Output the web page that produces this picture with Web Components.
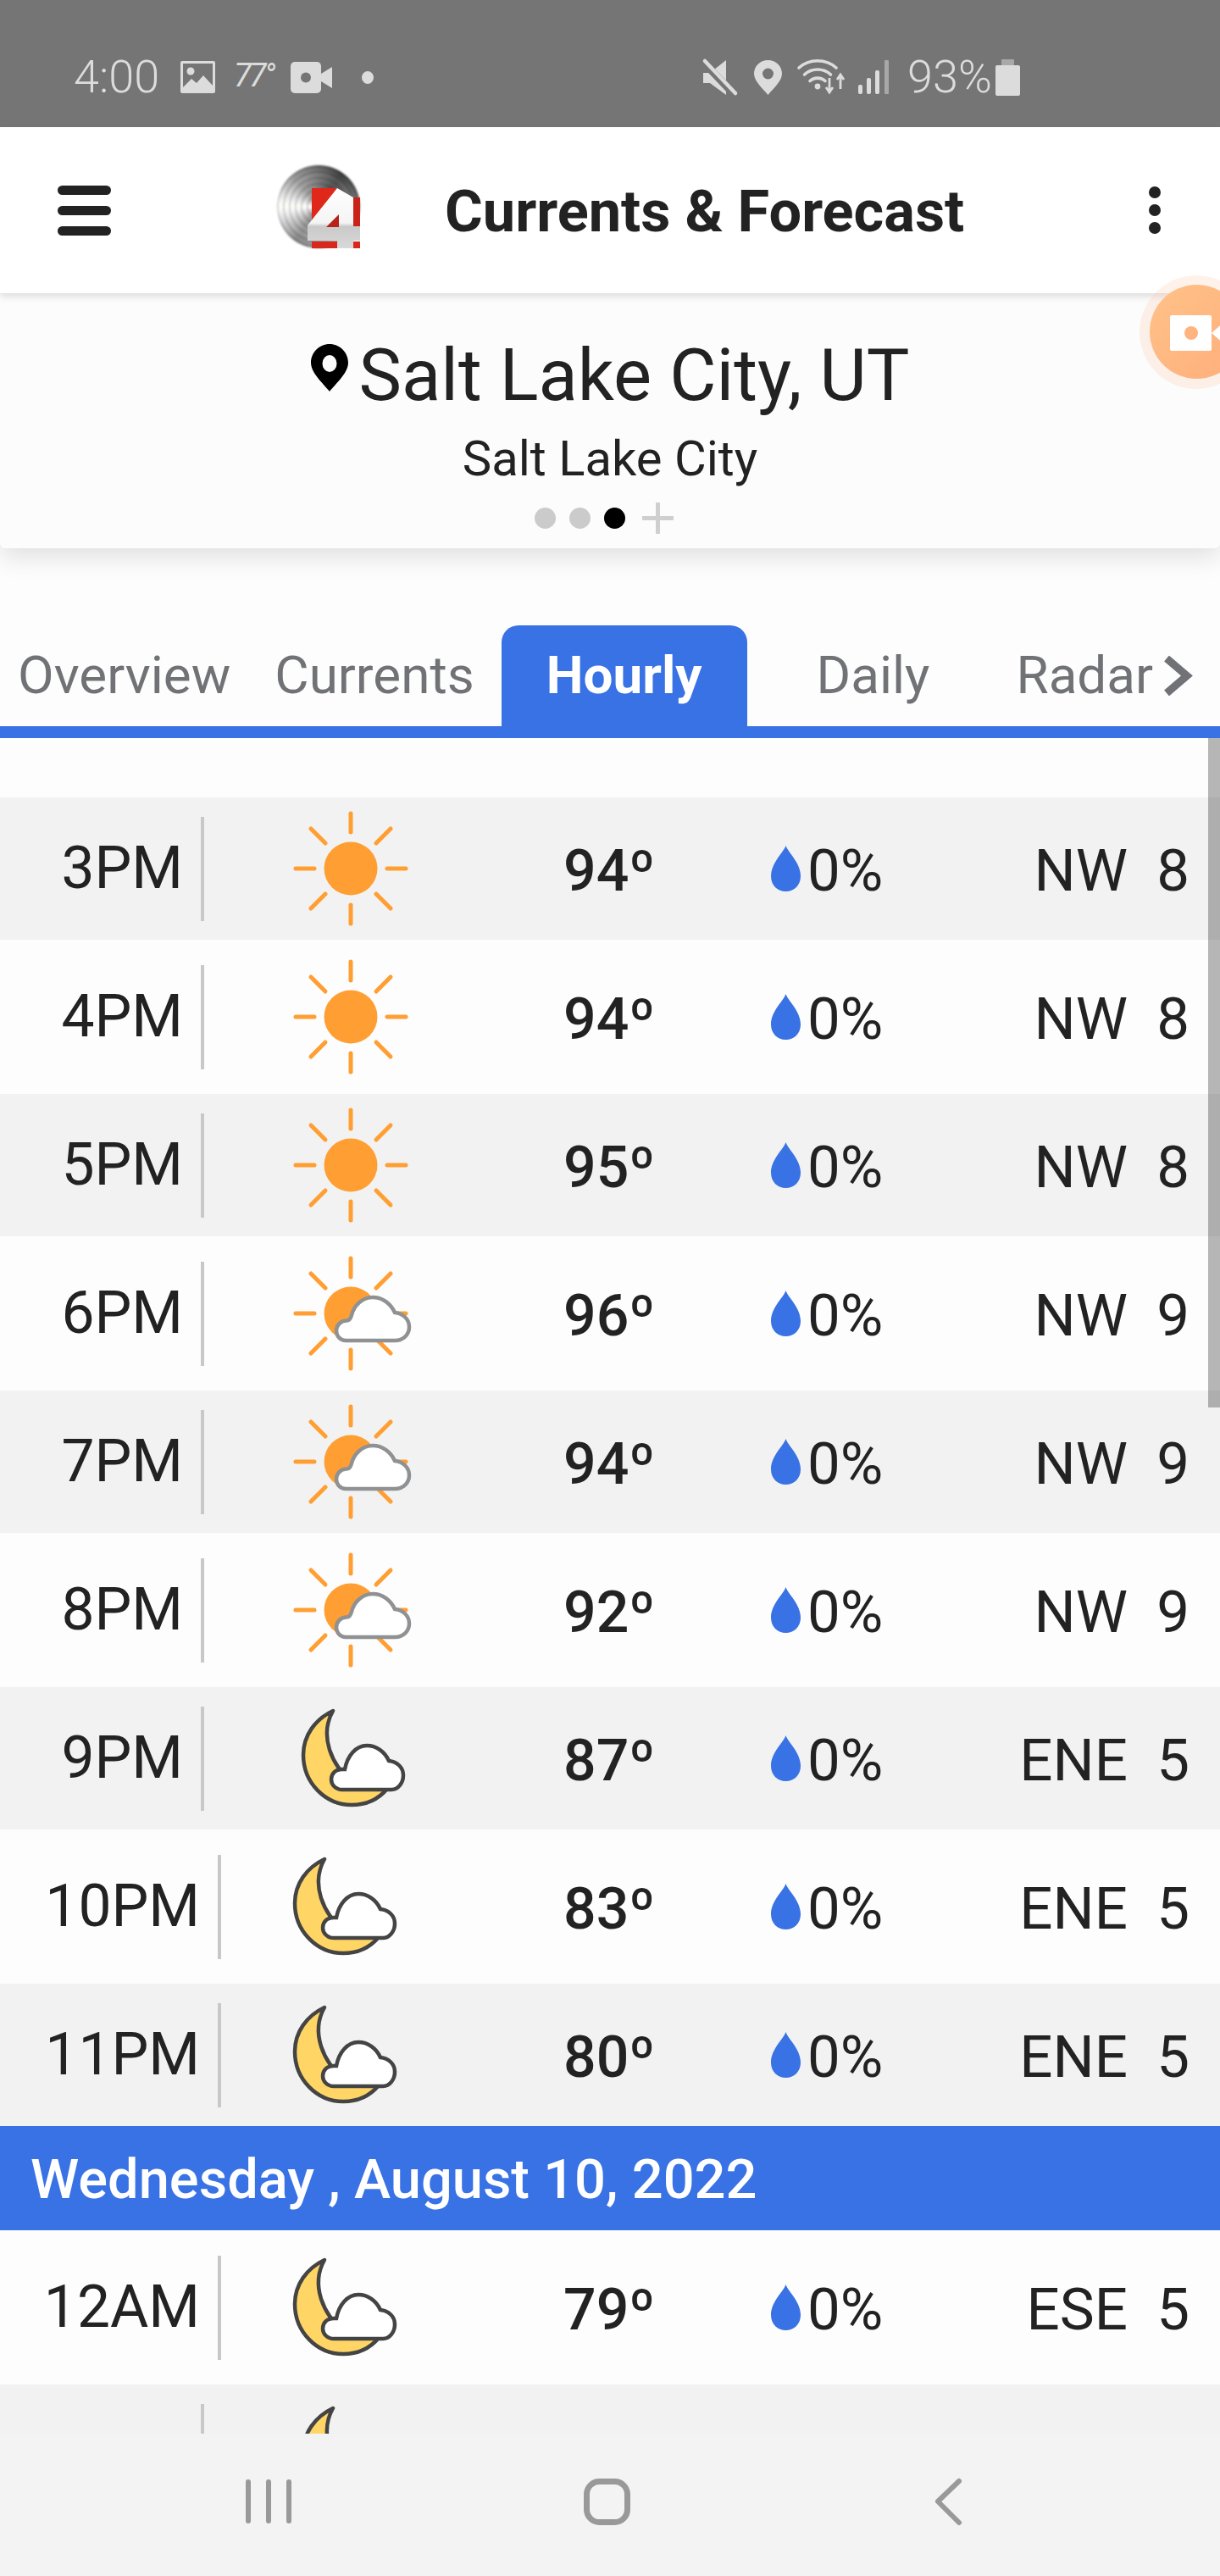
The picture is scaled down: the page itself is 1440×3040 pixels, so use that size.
<!DOCTYPE html>
<html lang="en">
<head>
<meta charset="utf-8">
<title>Currents &amp; Forecast</title>
<style>
  html, body { margin:0; padding:0; background:#fdfdfd; }
  body { width:1440px; height:3040px; overflow:hidden; font-family:Roboto, "Liberation Sans", sans-serif; color:#222; }
  weather-app { --blue:#3872e4; }
</style>
</head>
<body>
<weather-app>
  <status-bar></status-bar>
  <app-bar>Currents &amp; Forecast</app-bar>
  <location-card city="Salt Lake City, UT" area="Salt Lake City"></location-card>
  <tab-strip></tab-strip>
  <hourly-list></hourly-list>
  <nav-bar></nav-bar>
  <record-bubble></record-bubble>
</weather-app>

<script>
const STATUS_ICONS = {
  image: [41, 38, `<rect width="41" height="38" rx="2" fill="#dcdcdc"/><rect x="3" y="3" width="35" height="32" fill="#757575"/><circle cx="12" cy="12" r="4.5" fill="#dcdcdc"/><path d="M3 31 L13 21 L19 26 L27 17 L38 29 V35 H3 Z" fill="#dcdcdc"/>`],
  video: [49, 37, `<rect width="36" height="37" rx="5" fill="#dcdcdc"/><path d="M36 14 L49 6 V31 L36 23 Z" fill="#dcdcdc"/><circle cx="18" cy="18.5" r="6" fill="#757575"/>`],
  mute: [40, 41, `<path d="M0 15 H8 L27 0 V41 L8 27 H0 Z" fill="#dcdcdc"/><path d="M-2 0 L38 42" stroke="#757575" stroke-width="9"/><path d="M2 1 L38 39" stroke="#dcdcdc" stroke-width="4.5" stroke-linecap="round"/>`],
  pin: [33, 41, `<path fill-rule="evenodd" d="M16.5 0 C26 0 33 7 33 16 C33 25 22 34 16.5 41 C11 34 0 25 0 16 C0 7 7 0 16.5 0 Z M16.5 9.5 A6.5 6.5 0 1 0 16.5 22.5 A6.5 6.5 0 1 0 16.5 9.5 Z" fill="#dcdcdc"/>`],
  wifi: [56, 42, `<g fill="none" stroke="#dcdcdc" stroke-width="3.6" stroke-linecap="round"><path d="M1 10 C13 -1 33 -1 45 10"/><path d="M7.5 18 C16 10 30 10 38.5 18"/><path d="M14 25.5 C19 21 27 21 32 25.5"/></g><circle cx="23" cy="32" r="3.4" fill="#dcdcdc"/><path d="M37 22 V38 M33 33 L37 39 L41 33 M50 35 V19 M46 24 L50 18 L54 24" fill="none" stroke="#dcdcdc" stroke-width="2.8"/>`],
  signal: [37, 40, `<rect x="0" y="29" width="5" height="11" rx="2" fill="#dcdcdc"/><rect x="10" y="21" width="5" height="19" rx="2" fill="#dcdcdc"/><rect x="20" y="12" width="5" height="28" rx="2" fill="#dcdcdc"/><rect x="31" y="0" width="5" height="40" rx="1" fill="#a8a8a8"/>`],
  battery: [29, 43, `<rect x="7" y="0" width="15" height="8" rx="1" fill="#a9a9a9"/><rect x="0" y="7" width="29" height="36" rx="2" fill="#dcdcdc"/>`],
};

class StatusIcon extends HTMLElement {
  connectedCallback() {
    if (this.shadowRoot) return;
    const [w, h, body] = STATUS_ICONS[this.getAttribute('name')];
    const shadow = this.attachShadow({ mode: 'open' });
    shadow.innerHTML = `
      <style>:host { display:block; flex:none; width:${w}px; height:${h}px; } svg { display:block; overflow:visible; }</style>
      <svg width="${w}" height="${h}" viewBox="0 0 ${w} ${h}">${body}</svg>
    `;
  }
}

class StatusBar extends HTMLElement {
  connectedCallback() {
    if (this.shadowRoot) return;
    const shadow = this.attachShadow({ mode: 'open' });
    shadow.innerHTML = `
      <style>
        :host { display:flex; align-items:center; box-sizing:border-box; height:150px; padding:32px 236px 0 87px; background:#757575; color:#dcdcdc; font:300 54px/1 Roboto, sans-serif; }
        .time { width:101px; }
        .temp { width:47px; font-size:38px; font-weight:400; font-style:italic; margin-left:22px; letter-spacing:-3px; margin-top:-4px; white-space:nowrap; }
        .dot { width:14px; height:15px; border-radius:50%; background:#dcdcdc; margin-left:35px; }
        .pct { width:95px; white-space:nowrap; }
        .image { margin-left:25px; }
        .video { margin-left:20px; }
        .right { display:flex; align-items:center; margin-left:auto; }
        .g1 { margin-left:20px; } .g2 { margin-left:19px; } .g3 { margin-left:15px; } .g4 { margin-left:21px; } .g5 { margin-left:9px; }
      </style>
      <span class="time">4:00</span>
      <status-icon class="image" name="image"></status-icon>
      <span class="temp">77°</span>
      <status-icon class="video" name="video"></status-icon>
      <span class="dot"></span>
      <div class="right">
        <status-icon name="mute"></status-icon>
        <status-icon class="g1" name="pin"></status-icon>
        <status-icon class="g2" name="wifi"></status-icon>
        <status-icon class="g3" name="signal"></status-icon>
        <span class="pct g4">93%</span>
        <status-icon class="g5" name="battery"></status-icon>
      </div>
    `;
  }
}

class StationLogo extends HTMLElement {
  connectedCallback() {
    if (this.shadowRoot) return;
    const shadow = this.attachShadow({ mode: 'open' });
    shadow.innerHTML = `
      <style>
        :host { display:block; position:relative; flex:none; width:100px; height:100px; }
        .disc { position:absolute; left:0; top:0; width:98px; height:98px; border-radius:50%; filter:blur(1px);
          background:
            repeating-radial-gradient(circle, rgba(0,0,0,0) 0 5px, rgba(0,0,0,.15) 5px 7px),
            radial-gradient(circle, rgba(255,255,255,.22) 0 55%, rgba(255,255,255,0) 80%),
            conic-gradient(from 0deg, #555 0deg, #222 35deg, #666 90deg, #999 150deg, #777 215deg, #f2f2f2 262deg, #fffdf4 270deg, #f2f2f2 280deg, #888 320deg, #555 360deg); }
        svg { position:absolute; left:-27px; top:-45px; filter:blur(.5px); }
      </style>
      <div class="disc"></div>
      <svg width="160" height="160" viewBox="0 0 160 160">
        <defs>
          <linearGradient id="four" x1="0" y1="0" x2="0" y2="1">
            <stop offset="0" stop-color="#ffffff"/><stop offset=".58" stop-color="#f4f4f4"/><stop offset=".64" stop-color="#c9c9c9"/><stop offset="1" stop-color="#d9d9d9"/>
          </linearGradient>
        </defs>
        <path d="M68 72 H98 L68 110 Z" fill="#e0281a"/>
        <path d="M117 83 H125 V117 H117 Z" fill="#c9231a"/>
        <path d="M68 135 H98 V143 H68 Z M117 135 H125 V143 H117 Z" fill="#d8281c"/>
        <path d="M98 72 L117 83 V117 H125 V134 H117 V143 H98 V134 H63 V116 Z" fill="url(#four)"/>
        <path d="M100 103 V118 H85 Z" fill="#b5231b"/>
      </svg>
    `;
  }
}

class AppBar extends HTMLElement {
  connectedCallback() {
    if (this.shadowRoot) return;
    const shadow = this.attachShadow({ mode: 'open' });
    shadow.innerHTML = `
      <style>
        :host { display:flex; align-items:center; box-sizing:border-box; height:196px; padding-left:68px; background:#fff; position:relative; z-index:2; box-shadow:0 4px 8px rgba(0,0,0,.12); }
        .burger { display:flex; flex-direction:column; gap:13px; width:63px; flex:none; }
        .burger i { display:block; height:11px; border-radius:6px; background:#222; }
        station-logo { margin-left:196px; margin-top:-6px; }
        .title { margin-left:98px; margin-top:5px; font:700 68.500px/1 Roboto, sans-serif; color:#222; white-space:nowrap; }
        .more { display:flex; flex-direction:column; gap:7px; margin-left:auto; margin-right:70px; }
        .more i { display:block; width:14px; height:14px; border-radius:50%; background:#222; }
      </style>
      <div class="burger"><i></i><i></i><i></i></div>
      <station-logo></station-logo>
      <div class="title"><slot></slot></div>
      <div class="more"><i></i><i></i><i></i></div>
    `;
  }
}

class LocationCard extends HTMLElement {
  connectedCallback() {
    if (this.shadowRoot) return;
    const shadow = this.attachShadow({ mode: 'open' });
    shadow.innerHTML = `
      <style>
        :host { display:block; position:relative; z-index:1; box-sizing:border-box; height:301px; background:#fcfcfc; box-shadow:0 10px 30px rgba(0,0,0,.12); font-family:Roboto, sans-serif; color:#222; text-align:center; border-radius:0 0 6px 6px; }
        .city { display:flex; justify-content:center; align-items:center; gap:13px; padding-top:55px; height:84px; font-size:85px; line-height:84px; white-space:nowrap; }
        .city svg { margin-top:-18px; }
        .area { margin-top:22px; font-size:58px; line-height:68px; }
        .pager { display:flex; justify-content:center; align-items:center; gap:16px; margin-top:18px; padding-right:14px; }
        .pager i { display:block; width:25px; height:25px; border-radius:50%; background:#cbcbcb; }
        .pager i.on { background:#000; }
        .pager svg { margin-left:4px; }
      </style>
      <div class="city">
        <svg width="44" height="56" viewBox="0 0 44 56"><path fill-rule="evenodd" d="M22 0 C34 0 44 10 44 22 C44 34 30 46 22 56 C14 46 0 34 0 22 C0 10 10 0 22 0 Z M22 13 A8.500 10 0 1 0 22 33 A8.500 10 0 1 0 22 13 Z" fill="#000"/></svg>
        <span>${this.getAttribute('city')}</span>
      </div>
      <div class="area">${this.getAttribute('area')}</div>
      <div class="pager">
        <i></i><i></i><i class="on"></i>
        <svg width="37" height="37" viewBox="0 0 37 37"><path d="M0 18.500 H37 M18.500 0 V37" stroke="#cfcfcf" stroke-width="5"/></svg>
      </div>
    `;
  }
}

// screen recorder bubble floats over the app bar and card
class RecordBubble extends HTMLElement {
  connectedCallback() {
    if (this.shadowRoot) return;
    const shadow = this.attachShadow({ mode: 'open' });
    shadow.innerHTML = `
      <style>
        :host { display:block; position:absolute; left:1345px; top:325px; width:134px; height:134px; border-radius:50%; background:rgba(255,190,150,.2); z-index:5; }
        :host::before { content:""; position:absolute; left:12px; top:11px; width:111px; height:111px; border-radius:50%; background:linear-gradient(135deg,#ffc288,#ffae7c); }
        svg { position:absolute; left:36px; top:47px; }
      </style>
      <svg width="60" height="42" viewBox="0 0 60 42"><rect width="49" height="42" rx="2" fill="#fff"/><circle cx="25" cy="21" r="8" fill="#ffb480"/><path d="M49 21 L64 8 V34 Z" fill="#fff"/></svg>
    `;
  }
}

class TabStrip extends HTMLElement {
  connectedCallback() {
    if (this.shadowRoot) return;
    const tabs = [
      ['Overview', 21, 0],
      ['Currents', 52, 0],
      ['Hourly', 32, 53],
      ['Daily', 82, 0],
      ['Radar', 102, 0],
    ];
    const shadow = this.attachShadow({ mode: 'open' });
    shadow.innerHTML = `
      <style>
        :host { display:flex; align-items:stretch; box-sizing:border-box; height:224px; padding-top:91px; border-bottom:14px solid var(--blue); font:400 62px/1 Roboto, sans-serif; color:#707276; white-space:nowrap; background:#fdfdfd; }
        span { display:flex; align-items:center; padding-bottom:2px; }
        span.on { background:var(--blue); color:#fff; font-weight:700; border-radius:20px 20px 0 0; }
        svg { margin:0 0 0 12px; align-self:center; }
      </style>
      ${tabs.map(([label, gap, pad]) => `<span class="${pad ? 'on' : ''}" style="margin-left:${gap}px;padding-left:${pad}px;padding-right:${pad}px">${label}</span>`).join('')}
      <svg width="35" height="47" viewBox="0 0 35 47"><path d="M4 3 L28 23.500 L4 44" fill="none" stroke="#707276" stroke-width="9"/></svg>
    `;
  }
}

const RAYS = `<g stroke="#ff9f33" stroke-width="5" stroke-linecap="round">
  <path d="M70 5 V27 M70 113 V135 M5 70 H27 M113 70 H135 M23 23 L40 40 M117 23 L100 40 M23 117 L40 100 M117 117 L100 100"/>
</g>`;
const WEATHER_ICONS = {
  sun: `${RAYS}<circle cx="70" cy="70" r="31.500" fill="#ff9f33"/>`,
  partly: `${RAYS}<circle cx="70" cy="70" r="31.500" fill="#ff9f33"/>
    <path d="M64 102 C57 102 53 96 53 90.500 C53 84 58 78.500 65 78.500 C68 78.500 70 76 71 72 C74 60 84 51 96 51 C107 51 117 58 122 69 C132 70 139 77 139 86 C139 95 132 102 122 102 Z" fill="#fff" stroke="#8f9193" stroke-width="4.500"/>`,
  moon: `<path d="M49 14 C28 24 14 43 14 66 C14 99 40 125 71 125 C88 125 103 118 113 106 C80 110 55 90 45 60 C40 44 41 28 49 14 Z" fill="#ffd666" stroke="#444" stroke-width="4.500" stroke-linejoin="round"/>
    <path d="M60 107 C52 107 47 101 47 95 C47 88 52 83 60 83 H63 C66 67 76 55 89 55 C100 55 110 62 115 73 C125 74 132 81 132 90 C132 99 126 107 118 107 Z" fill="#fff" stroke="#444" stroke-width="4.500"/>`,
};

class HourRow extends HTMLElement {
  connectedCallback() {
    if (this.shadowRoot) return;
    // the last row is cut by the nav bar above its text line, so only divider and icon show
    const cut = this.hasAttribute('cut');
    const drop = `<svg width="35" height="54" viewBox="0 0 35 54"><path d="M17.500 0 C20 8 35 20 35 36 C35 47 27 54 17.500 54 C8 54 0 47 0 36 C0 20 15 8 17.500 0 Z" fill="#3872e4"/></svg>`;
    const shadow = this.attachShadow({ mode: 'open' });
    shadow.innerHTML = `
      <style>
        :host { display:grid; grid-template-columns:241px 424px 245px 1fr; align-items:center; height:182px; background:#fdfdfd; font:400 69.500px/1 Roboto, sans-serif; color:#222; }
        :host([shade]) { height:168px; background:#f2f2f2; }
        :host([wide]) { grid-template-columns:261px 404px 245px 1fr; }
        .time { display:flex; align-items:center; justify-content:flex-end; height:123px; border-right:4px solid #c8c8c8; padding-right:21px; box-sizing:border-box; }
        .icon { padding-left:103px; }
        :host([wide]) .icon { padding-left:73px; }
        svg.sky { display:block; overflow:visible; }
        .temp { font-weight:500; font-size:68px; padding-top:5px; }
        .rest { display:grid; grid-template-columns:auto 1fr; align-items:center; }
        .rain { display:flex; align-items:center; gap:8px; padding-top:5px; font-size:69px; }
        .rain svg { margin-top:-6px; }
        .wind { display:flex; justify-content:flex-end; padding:4px 36px 0 0; font-size:69px; }
        .dir { white-space:nowrap; }
        .speed { width:73px; text-align:right; }
      </style>
      <div class="time">${cut ? '' : this.getAttribute('time')}</div>
      <div class="icon"><svg class="sky" width="140" height="140" viewBox="0 0 140 140">${WEATHER_ICONS[this.getAttribute('icon')]}</svg></div>
      ${cut ? '' : `
      <div class="temp">${this.getAttribute('temp')}º</div>
      <div class="rest">
        <div class="rain">${drop}<span>${this.getAttribute('rain')}%</span></div>
        <div class="wind"><span class="dir">${this.getAttribute('dir')}</span><span class="speed">${this.getAttribute('speed')}</span></div>
      </div>`}
    `;
  }
}

class DateBar extends HTMLElement {
  connectedCallback() {
    if (this.shadowRoot) return;
    const shadow = this.attachShadow({ mode: 'open' });
    shadow.innerHTML = `
      <style>
        :host { display:flex; align-items:center; box-sizing:border-box; height:123px; padding:4px 0 0 36px; background:var(--blue); color:#fff; font:500 65px/1 Roboto, sans-serif; white-space:nowrap; }
      </style>
      <slot></slot>
    `;
  }
}

class HourlyList extends HTMLElement {
  connectedCallback() {
    if (this.shadowRoot) return;
    const hours = [
      ['3PM', 'sun', 94, 'NW', 8], ['4PM', 'sun', 94, 'NW', 8], ['5PM', 'sun', 95, 'NW', 8],
      ['6PM', 'partly', 96, 'NW', 9], ['7PM', 'partly', 94, 'NW', 9], ['8PM', 'partly', 92, 'NW', 9],
      ['9PM', 'moon', 87, 'ENE', 5], ['10PM', 'moon', 83, 'ENE', 5], ['11PM', 'moon', 80, 'ENE', 5],
    ];
    const row = ([time, icon, temp, dir, speed], shade) =>
      `<hour-row time="${time}" icon="${icon}" temp="${temp}" rain="0" dir="${dir}" speed="${speed}"${shade ? ' shade' : ''}${time.length > 3 ? ' wide' : ''}></hour-row>`;
    const shadow = this.attachShadow({ mode: 'open' });
    shadow.innerHTML = `
      <style>
        :host { display:block; position:relative; height:2001px; overflow:hidden; padding-top:70px; box-sizing:border-box; background:#fdfdfd; }
        .thumb { position:absolute; right:0; top:0; width:14px; height:790px; background:rgba(0,0,0,.28); }
      </style>
      ${hours.map((h, i) => row(h, i % 2 === 0)).join('')}
      <date-bar>Wednesday , August 10, 2022</date-bar>
      ${row(['12AM', 'moon', 79, 'ESE', 5], false)}
      <hour-row icon="moon" shade cut></hour-row>
      <div class="thumb"></div>
    `;
  }
}

class NavBar extends HTMLElement {
  connectedCallback() {
    if (this.shadowRoot) return;
    const shadow = this.attachShadow({ mode: 'open' });
    shadow.innerHTML = `
      <style>
        :host { display:block; height:168px; background:#f3f3f3; }
        svg { display:block; }
      </style>
      <svg width="1440" height="168" viewBox="0 0 1440 168">
        <g fill="#999"><rect x="290" y="54" width="6" height="52" rx="3"/><rect x="314" y="54" width="6" height="52" rx="3"/><rect x="338" y="54" width="6" height="52" rx="3"/></g>
        <rect x="692.500" y="56.500" width="48" height="48" rx="15" fill="none" stroke="#999" stroke-width="7"/>
        <path d="M1132 56 L1107 80 L1132 105" fill="none" stroke="#999" stroke-width="6" stroke-linecap="round" stroke-linejoin="round"/>
      </svg>
    `;
  }
}

class WeatherApp extends HTMLElement {
  connectedCallback() {
    if (this.shadowRoot) return;
    const shadow = this.attachShadow({ mode: 'open' });
    shadow.innerHTML = `
      <style>:host { display:flex; flex-direction:column; position:relative; width:1440px; height:3040px; overflow:hidden; }</style>
      <slot></slot>
    `;
  }
}

customElements.define('status-icon', StatusIcon);
customElements.define('status-bar', StatusBar);
customElements.define('station-logo', StationLogo);
customElements.define('app-bar', AppBar);
customElements.define('location-card', LocationCard);
customElements.define('record-bubble', RecordBubble);
customElements.define('tab-strip', TabStrip);
customElements.define('hour-row', HourRow);
customElements.define('date-bar', DateBar);
customElements.define('hourly-list', HourlyList);
customElements.define('nav-bar', NavBar);
customElements.define('weather-app', WeatherApp);
</script>
</body>
</html>
